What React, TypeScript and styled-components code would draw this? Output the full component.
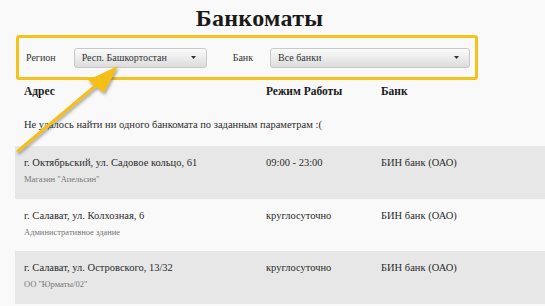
import React, { FC } from 'react'
import styled, { createGlobalStyle } from 'styled-components'

interface IAtm {
    address: string;
    place: string;
    hours: string;
    bank: string;
}

const ATMS: IAtm[] = [
    { address: 'г. Октябрьский, ул. Садовое кольцо, 61', place: 'Магазин "Апельсин"', hours: '09:00 - 23:00', bank: 'БИН банк (ОАО)' },
    { address: 'г. Салават, ул. Колхозная, 6', place: 'Административное здание', hours: 'круглосуточно', bank: 'БИН банк (ОАО)' },
    { address: 'г. Салават, ул. Островского, 13/32', place: 'ОО "Юрматы/02"', hours: 'круглосуточно', bank: 'БИН банк (ОАО)' },
];

const GlobalStyle = createGlobalStyle`
    html, body {
        margin: 0;
        padding: 0;
        background: #f9f9f9;
    }
    body {
        font-family: "Liberation Serif", "DejaVu Serif", serif;
        color: #2b2b2b;
        overflow: hidden;
    }
`;

const Caret: FC = () => (
    <svg width="5" height="3" viewBox="0 0 5 3">
        <path d="M0 0 L5 0 L2.5 3 Z" fill="#333" />
    </svg>
);

const Arrow: FC = () => (
    <ArrowLayer width="545" height="306" viewBox="0 0 545 306">
        <defs>
            <filter id="shade" x="-20%" y="-20%" width="140%" height="140%">
                <feDropShadow dx="1" dy="2" stdDeviation="1.5" floodColor="#555" floodOpacity="0.55" />
            </filter>
        </defs>
        <g filter="url(#shade)">
            <line x1="18" y1="151" x2="100" y2="82" stroke="#f4bf12" strokeWidth="3" strokeLinecap="round" />
            <path d="M118 66 L88 80 L104 93 Z" fill="#f4bf12" />
        </g>
    </ArrowLayer>
);

const App: FC = () => {
    return (
        <Page>
            <GlobalStyle />
            <Title>Банкоматы</Title>
            <FilterBox>
                <FilterLabel>Регион</FilterLabel>
                <Select width={133}>
                    <span>Респ. Башкортостан</span>
                    <Caret />
                </Select>
                <FilterLabel gap={26}>Банк</FilterLabel>
                <Select width={200}>
                    <span>Все банки</span>
                    <Caret />
                </Select>
            </FilterBox>
            <Table>
                <HeadRow>
                    <span>Адрес</span>
                    <span>Режим Работы</span>
                    <span>Банк</span>
                </HeadRow>
                <Message>Не удалось найти ни одного банкомата по заданным параметрам :(</Message>
                {ATMS.map((atm, index) => (
                    <AtmRow key={index} shaded={index % 2 === 0}>
                        <div>
                            <Address>{atm.address}</Address>
                            <Place>{atm.place}</Place>
                        </div>
                        <Cell>{atm.hours}</Cell>
                        <Cell>{atm.bank}</Cell>
                    </AtmRow>
                ))}
            </Table>
            <Arrow />
        </Page>
    )
}

const Page = styled.div`
    position: relative;
    width: 545px;
    height: 306px;
    overflow: hidden;
`;

const Title = styled.h1`
    margin: 0;
    padding: 4px 26px 0 0;
    height: 31px;
    box-sizing: border-box;
    text-align: center;
    font-family: "Liberation Serif", serif;
    font-size: 24px;
    font-weight: bold;
    line-height: 28px;
    letter-spacing: 0.3px;
    color: #1a1a1a;
`;

const FilterBox = styled.div`
    box-sizing: border-box;
    display: flex;
    align-items: center;
    margin-top: 4px;
    margin-left: 16px;
    width: 462px;
    height: 45px;
    padding-left: 7px;
    border: 3px solid #f3c21b;
    border-radius: 3px;
`;

const FilterLabel = styled.span<{ gap?: number }>`
    margin-left: ${p => (p.gap ?? 0)}px;
    margin-right: ${p => (p.gap ? 17 : 18)}px;
    font-size: 10px;
    color: #333;
`;

const Select = styled.div<{ width: number }>`
    box-sizing: border-box;
    display: flex;
    align-items: center;
    justify-content: space-between;
    width: ${p => p.width}px;
    height: 20px;
    padding: 0 10px 0 7px;
    border: 1px solid #c9c9c9;
    border-radius: 3px;
    background: linear-gradient(#fbfbfb, #dcdcdc);
    font-size: 10px;
    color: #333;
`;

const Table = styled.div`
    margin-left: 15px;
    margin-top: 0;
`;

const Grid = styled.div`
    display: grid;
    grid-template-columns: 242px 115px 1fr;
    padding-left: 9px;
`;

const HeadRow = styled(Grid)`
    height: 22px;
    align-items: center;
    font-family: "Liberation Serif", serif;
    font-size: 11.5px;
    font-weight: bold;
    color: #1a1a1a;
`;

const Message = styled.div`
    padding-left: 9px;
    height: 44px;
    box-sizing: border-box;
    font-size: 10.5px;
    color: #2b2b2b;
    display: flex;
    align-items: center;
`;

const AtmRow = styled(Grid)<{ shaded: boolean }>`
    box-sizing: border-box;
    height: 52.5px;
    padding-top: 9px;
    background: ${p => (p.shaded ? '#e7e7e7' : 'transparent')};
`;

const Address = styled.div`
    font-size: 10.5px;
    line-height: 16px;
    color: #2b2b2b;
`;

const Place = styled.div`
    font-size: 8.5px;
    line-height: 16px;
    color: #777;
`;

const Cell = styled.div`
    font-size: 10.5px;
    line-height: 16px;
    color: #2b2b2b;
`;

const ArrowLayer = styled.svg`
    position: absolute;
    left: 0;
    top: 0;
    pointer-events: none;
`;

export default App
